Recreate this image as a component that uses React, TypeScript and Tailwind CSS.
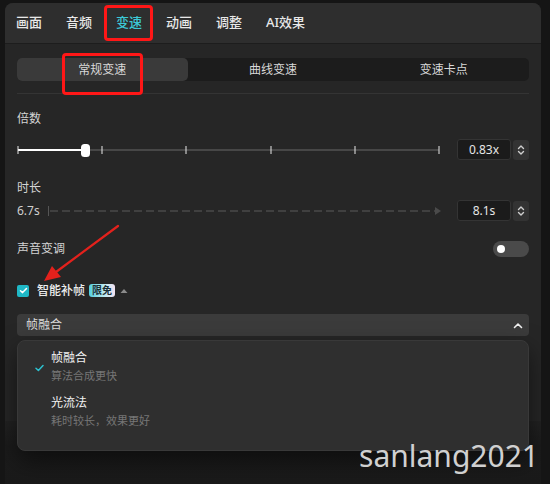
import React from "react";

const FONT = { fontFamily: '"Noto Sans", "Noto Sans CJK SC", sans-serif' };

function Stepper() {
  return (
    <div className="w-[16px] h-[20px] rounded-[3px] bg-[#333333] flex items-center justify-center">
      <svg width="8" height="12" viewBox="0 0 8 12" fill="none" stroke="#cfcfcf" strokeWidth="1.4" strokeLinecap="round" strokeLinejoin="round">
        <path d="M1.5 4.5 L4 2 L6.5 4.5" />
        <path d="M1.5 7.5 L4 10 L6.5 7.5" />
      </svg>
    </div>
  );
}

function NumBox({ v }: { v: string }) {
  return (
    <div className="flex items-center gap-[2px]">
      <div className="w-[54px] h-[21px] rounded-[3px] bg-[#1b1b1b] border border-[#343434] flex items-center justify-center text-[12px] text-[#e6e6e6]">
        {v}
      </div>
      <Stepper />
    </div>
  );
}

export default function App() {
  const ticks = [0, 84, 168, 253, 337, 421];
  return (
    <div className="relative w-[550px] h-[484px] bg-[#151515] overflow-hidden" style={FONT}>
      <div className="ml-[5px] mt-[3px] w-[536px] h-[481px] rounded-t-[8px] bg-[#262626] flex flex-col overflow-hidden">
        {/* tabs */}
        <div className="h-[41px] shrink-0 bg-[#2e2e2e] border-b border-[#1d1d1d] flex items-center pl-[11px] text-[13px] text-[#e8e8e8] font-medium">
          {["画面", "音频", "变速", "动画", "调整", "AI效果"].map((t) => (
            <div key={t} className={"w-[50px] " + (t === "变速" ? "text-[#3cc8d6]" : "")}>
              {t}
            </div>
          ))}
        </div>

        <div className="px-[12px] flex flex-col">
          {/* segmented */}
          <div className="mt-[14px] h-[23px] rounded-[5px] bg-[#1c1c1c] grid grid-cols-3 text-[12px] text-[#d8d8d8]">
            <div className="rounded-[5px] bg-[#3a3a3a] flex items-center justify-center">常规变速</div>
            <div className="flex items-center justify-center">曲线变速</div>
            <div className="flex items-center justify-center">变速卡点</div>
          </div>
          <div className="mt-[12px] h-px bg-[#343434]" />

          <div className="mt-[16px] text-[12px] leading-[17px] text-[#d4d4d4]">倍数</div>
          <div className="mt-[12px] h-[21px] flex items-center justify-between">
            <svg width="424" height="16" viewBox="0 0 424 16" className="block">
              <line x1="1" y1="8" x2="422" y2="8" stroke="#474747" strokeWidth="2" />
              <line x1="1" y1="8" x2="68" y2="8" stroke="#ffffff" strokeWidth="2" />
              {ticks.map((x) => (
                <line key={x} x1={x + 1} y1="4" x2={x + 1} y2="12" stroke="#e8e8e8" strokeWidth="1" />
              ))}
              <rect x="64" y="2" width="9" height="13" rx="3.5" fill="#ffffff" />
            </svg>
            <NumBox v="0.83x" />
          </div>

          <div className="mt-[19px] text-[12px] leading-[17px] text-[#d4d4d4]">时长</div>
          <div className="mt-[4px] h-[21px] flex items-center justify-between">
            <div className="flex items-center">
              <span className="w-[31px] text-[12px] text-[#cfcfcf]">6.7s</span>
              <svg width="396" height="12" viewBox="0 0 396 12" className="block">
                <line x1="0.5" y1="1" x2="0.5" y2="11" stroke="#555" strokeWidth="1" />
                <line x1="2" y1="6" x2="387" y2="6" stroke="#4a4a4a" strokeWidth="1.5" strokeDasharray="8 4" />
                <path d="M387 2 L393 6 L387 10 Z" fill="#4a4a4a" />
              </svg>
            </div>
            <NumBox v="8.1s" />
          </div>

          <div className="mt-[19px] h-[17px] flex items-center justify-between">
            <span className="text-[12px] text-[#d4d4d4]">声音变调</span>
            <div className="w-[36px] h-[16px] rounded-full bg-[#4a4a4a] flex items-center pl-[4px]">
              <div className="w-[8px] h-[8px] rounded-full bg-white" />
            </div>
          </div>

          <div className="mt-[27px] h-[13px] flex items-center">
            <div className="w-[12px] h-[12px] rounded-[2px] bg-[#1fb8c6] flex items-center justify-center">
              <svg width="9" height="9" viewBox="0 0 9 9" fill="none" stroke="white" strokeWidth="1.5" strokeLinecap="round" strokeLinejoin="round">
                <path d="M1.5 4.7 L3.6 6.6 L7.5 2.5" />
              </svg>
            </div>
            <span className="ml-[8px] text-[12px] text-[#ececec] font-medium">智能补帧</span>
            <span className="ml-[4px] h-[13px] px-[3px] rounded-[3px] text-[10px] leading-[13px] font-bold text-[#1a2f36] bg-[linear-gradient(90deg,#54cfe0,#bfeaf0_60%,#f3e2f2)]">
              限免
            </span>
            <svg width="8" height="6" viewBox="0 0 8 6" className="ml-[5px]">
              <path d="M0.5 5 L4 1 L7.5 5 Z" fill="#8a8a8a" />
            </svg>
          </div>

          <div className="mt-[17px] h-[22px] rounded-[4px] bg-[#3b3b3b] flex items-center justify-between pl-[9px] pr-[6px]">
            <span className="text-[12px] text-[#dcdcdc]">帧融合</span>
            <svg width="10" height="7" viewBox="0 0 10 7" fill="none" stroke="#f0f0f0" strokeWidth="1.6" strokeLinecap="round" strokeLinejoin="round">
              <path d="M1.5 5.5 L5 2 L8.5 5.5" />
            </svg>
          </div>

          <div className="relative z-10 mt-[4px] h-[111px] rounded-[8px] bg-[#2f2f2f] border border-[#393939] shadow-[0_10px_24px_rgba(0,0,0,0.5)] pt-[8px] flex flex-col">
            <div className="flex items-start">
              <div className="w-[33px] flex justify-end pr-[7px] pt-[15px]">
                <svg width="9" height="8" viewBox="0 0 9 8" fill="none" stroke="#2cc1cf" strokeWidth="1.5" strokeLinecap="round" strokeLinejoin="round">
                  <path d="M1 4.3 L3.4 6.5 L8 1.5" />
                </svg>
              </div>
              <div className="flex flex-col">
                <span className="text-[12px] leading-[18px] text-[#f2f2f2]">帧融合</span>
                <span className="text-[11px] leading-[18px] text-[#767676]">算法合成更快</span>
              </div>
            </div>
            <div className="mt-[9px] flex items-start">
              <div className="w-[33px]" />
              <div className="flex flex-col">
                <span className="text-[12px] leading-[18px] text-[#f2f2f2]">光流法</span>
                <span className="text-[11px] leading-[18px] text-[#767676]">耗时较长，效果更好</span>
              </div>
            </div>
          </div>
        </div>
        <div className="flex-1 -mt-[30px] bg-[linear-gradient(180deg,#222222,#1b1b1b_40%,#1a1a1a)]" />
      </div>

      {/* annotations */}
      <div className="absolute z-20 left-[104px] top-[5px] w-[49px] h-[36px] border-[3px] border-[#ff1717] rounded-[4px]" />
      <div className="absolute z-20 left-[62px] top-[53px] w-[81px] h-[42px] border-[3px] border-[#ff1717] rounded-[4px]" />
      <svg className="absolute z-20 left-0 top-0" width="550" height="484" viewBox="0 0 550 484">
        <path d="M118 226 L56 272" stroke="#e3211c" strokeWidth="2.2" strokeLinecap="round" />
        <path d="M44 281 L52 266 L61 277 Z" fill="#e3211c" />
      </svg>
      <div
        className="absolute z-30 right-[11px] top-[436px] text-[30px] leading-[40px] text-[#d0d0d0]"
        style={{ fontFamily: '"Noto Sans", sans-serif' }}
      >
        sanlang2021
      </div>
    </div>
  );
}
